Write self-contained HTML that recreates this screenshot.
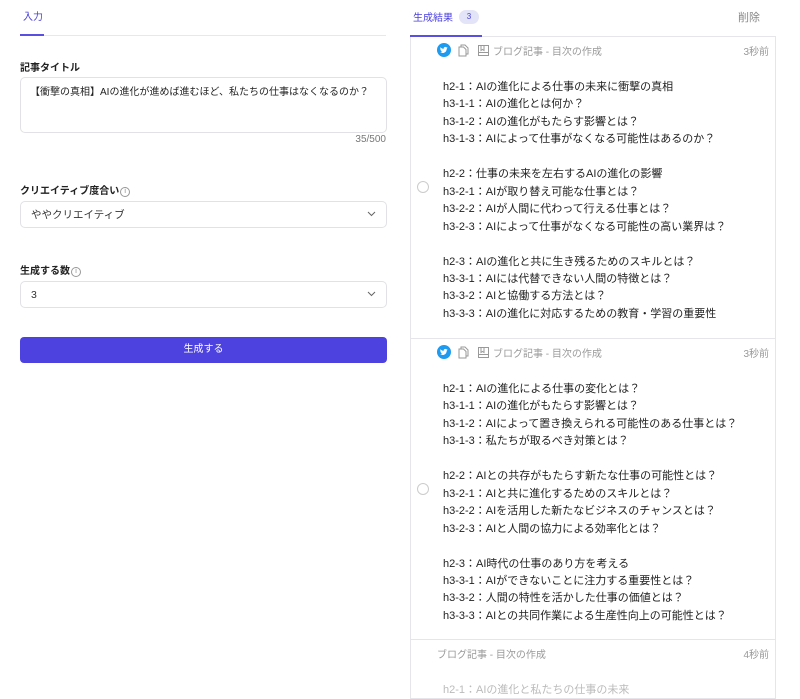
<!DOCTYPE html>
<html><head><meta charset="utf-8"><style>
*{box-sizing:border-box;margin:0;padding:0}
body{width:800px;height:693px;overflow:hidden;background:#fff;font-family:"Liberation Sans","Noto Sans CJK JP",sans-serif;color:#333;position:relative}
.abs{position:absolute}
.lbl{font-size:10px;font-weight:bold;color:#222}
.box{border:1px solid #e2e2e6;border-radius:5px;background:#fff}
.sel{font-size:10.5px;padding-left:10px;display:flex;align-items:center;color:#333}
.chev{position:absolute;right:10px;top:50%;margin-top:-4px}
.info{display:inline-block;width:10px;height:10px;border:1px solid #999;border-radius:50%;font-size:7px;text-align:center;line-height:8px;color:#888;vertical-align:1px;margin-left:1px;font-weight:normal}
.card{position:absolute;left:410px;width:366px;border:1px solid #e6e6ea;border-top:none}
.hdr{position:absolute;top:6px;left:26px;right:6px;height:14px;font-size:10px;color:#999;display:flex;align-items:center}
.hdr .t{margin-left:auto}
.body{position:absolute;left:32px;top:42px;font-size:11px;line-height:17.45px;color:#222;white-space:pre}
.radio{position:absolute;left:6px;width:12px;height:12px;border:1px solid #ccc;border-radius:50%}
</style></head><body>
<div class="abs" style="left:23px;top:8px;font-size:10px;color:#4a3fdf">入力</div>
<div class="abs" style="left:20px;top:35px;width:366px;height:1px;background:#e8e8ec"></div>
<div class="abs" style="left:20px;top:34px;width:24px;height:2px;background:#5a50e0"></div>

<div class="abs lbl" style="left:20px;top:59px">記事タイトル</div>
<div class="abs box" style="left:20px;top:77px;width:367px;height:56px;font-size:10px;padding:5px 0 0 9px;color:#222">【衝撃の真相】AIの進化が進めば進むほど、私たちの仕事はなくなるのか？</div>
<div class="abs" style="left:340px;top:134px;width:46px;text-align:right;font-size:10px;color:#777">35/500</div>

<div class="abs lbl" style="left:20px;top:182px">クリエイティブ度合い<span class="info">i</span></div>
<div class="abs box sel" style="left:20px;top:201px;width:367px;height:27px">ややクリエイティブ<svg class="chev" width="9" height="6" viewBox="0 0 9 6"><path d="M1 1l3.5 3.5L8 1" fill="none" stroke="#666" stroke-width="1"/></svg></div>

<div class="abs lbl" style="left:20px;top:262px">生成する数<span class="info">i</span></div>
<div class="abs box sel" style="left:20px;top:281px;width:367px;height:27px">3<svg class="chev" width="9" height="6" viewBox="0 0 9 6"><path d="M1 1l3.5 3.5L8 1" fill="none" stroke="#666" stroke-width="1"/></svg></div>

<div class="abs" style="left:20px;top:337px;width:367px;height:26px;background:#4d42e0;border-radius:4px;color:#fff;font-size:10px;text-align:center;line-height:26px">生成する</div>

<div class="abs" style="left:413px;top:9px;font-size:10px;color:#4a3fdf">生成結果</div>
<div class="abs" style="left:459px;top:10px;width:20px;height:14px;border-radius:7px;background:#e3e4f7;color:#4a3fdf;font-size:8px;text-align:center;line-height:14px">3</div>
<div class="abs" style="left:738px;top:9px;font-size:11px;color:#888">削除</div>
<div class="abs" style="left:410px;top:36px;width:366px;height:1px;background:#e6e6ea"></div>
<div class="abs" style="left:410px;top:35px;width:72px;height:2px;background:#5a50e0"></div>

<div class="card" style="top:37px;height:302px">
<div class="hdr"><svg width="14" height="14" viewBox="0 0 14 14"><circle cx="7" cy="7" r="7" fill="#1d9bf0"/><path d="M3.5 9.5c2.5 1.3 6 .3 6.3-4l.9-.8-.9.2.6-.8-1 .3a1.6 1.6 0 0 0-2.7 1.4c-1.3 0-2.5-.6-3.3-1.6-.5.9 0 1.8.6 2.2l-.7-.1c0 .8.6 1.4 1.3 1.5h-.7c.2.6.8 1 1.4 1-.6.5-1.4.7-2.3.6z" fill="#fff"/></svg><svg style="margin-left:7px" width="11" height="13" viewBox="0 0 11 13"><path d="M3 3V1h4l3 3v6H8M1 3h4.5L8 5.5V12H1z" fill="none" stroke="#999" stroke-width="1"/></svg><svg style="margin-left:9px" width="11" height="11" viewBox="0 0 11 11"><rect x=".5" y=".5" width="10" height="10" fill="none" stroke="#999"/><path d="M3 .5v5l1.5-1 1.5 1v-5M.5 7.5h10" fill="none" stroke="#999"/></svg><span style="margin-left:4px">ブログ記事 - 目次の作成</span><span class="t">3秒前</span></div>
<div class="radio" style="top:144px"></div>
<div class="body">h2-1：AIの進化による仕事の未来に衝撃の真相
h3-1-1：AIの進化とは何か？
h3-1-2：AIの進化がもたらす影響とは？
h3-1-3：AIによって仕事がなくなる可能性はあるのか？

h2-2：仕事の未来を左右するAIの進化の影響
h3-2-1：AIが取り替え可能な仕事とは？
h3-2-2：AIが人間に代わって行える仕事とは？
h3-2-3：AIによって仕事がなくなる可能性の高い業界は？

h2-3：AIの進化と共に生き残るためのスキルとは？
h3-3-1：AIには代替できない人間の特徴とは？
h3-3-2：AIと協働する方法とは？
h3-3-3：AIの進化に対応するための教育・学習の重要性</div>
</div>

<div class="card" style="top:338px;height:302px;border-top:1px solid #e6e6ea">
<div class="hdr"><svg width="14" height="14" viewBox="0 0 14 14"><circle cx="7" cy="7" r="7" fill="#1d9bf0"/><path d="M3.5 9.5c2.5 1.3 6 .3 6.3-4l.9-.8-.9.2.6-.8-1 .3a1.6 1.6 0 0 0-2.7 1.4c-1.3 0-2.5-.6-3.3-1.6-.5.9 0 1.8.6 2.2l-.7-.1c0 .8.6 1.4 1.3 1.5h-.7c.2.6.8 1 1.4 1-.6.5-1.4.7-2.3.6z" fill="#fff"/></svg><svg style="margin-left:7px" width="11" height="13" viewBox="0 0 11 13"><path d="M3 3V1h4l3 3v6H8M1 3h4.5L8 5.5V12H1z" fill="none" stroke="#999" stroke-width="1"/></svg><svg style="margin-left:9px" width="11" height="11" viewBox="0 0 11 11"><rect x=".5" y=".5" width="10" height="10" fill="none" stroke="#999"/><path d="M3 .5v5l1.5-1 1.5 1v-5M.5 7.5h10" fill="none" stroke="#999"/></svg><span style="margin-left:4px">ブログ記事 - 目次の作成</span><span class="t">3秒前</span></div>
<div class="radio" style="top:144px"></div>
<div class="body">h2-1：AIの進化による仕事の変化とは？
h3-1-1：AIの進化がもたらす影響とは？
h3-1-2：AIによって置き換えられる可能性のある仕事とは？
h3-1-3：私たちが取るべき対策とは？

h2-2：AIとの共存がもたらす新たな仕事の可能性とは？
h3-2-1：AIと共に進化するためのスキルとは？
h3-2-2：AIを活用した新たなビジネスのチャンスとは？
h3-2-3：AIと人間の協力による効率化とは？

h2-3：AI時代の仕事のあり方を考える
h3-3-1：AIができないことに注力する重要性とは？
h3-3-2：人間の特性を活かした仕事の価値とは？
h3-3-3：AIとの共同作業による生産性向上の可能性とは？</div>
</div>

<div class="card" style="top:639px;height:60px;border-top:1px solid #e6e6ea">
<div class="hdr"><span>ブログ記事 - 目次の作成</span><span class="t">4秒前</span></div>
<div class="body" style="color:#bbb">h2-1：AIの進化と私たちの仕事の未来</div>
</div>
</body></html>
